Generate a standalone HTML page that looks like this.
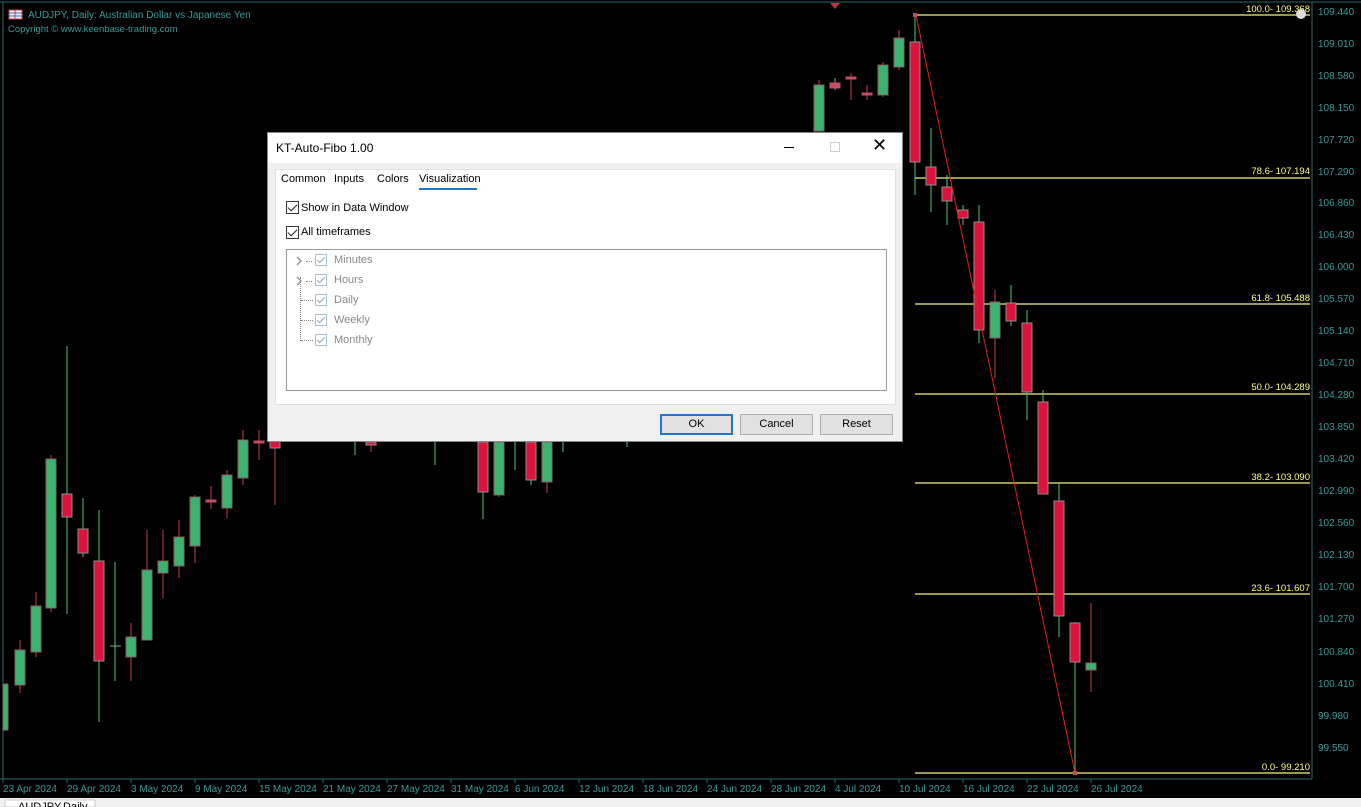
<!DOCTYPE html>
<html><head><meta charset="utf-8"><style>
*{margin:0;padding:0;box-sizing:border-box}
body{width:1361px;height:807px;background:#000;position:relative;overflow:hidden;font-family:"Liberation Sans",sans-serif}
svg{position:absolute;left:0;top:0}
.dlg{position:absolute;left:267px;top:132px;width:636px;height:310px;background:#f0f0f0;border:1px solid #888;font-size:11px;color:#000}
.tb{height:30px;background:#fff;position:relative}
.tb .t{position:absolute;left:8px;top:8px;font-size:12px}
.tab{position:absolute;top:40px;font-size:11px}
.cb{position:absolute;width:13px;height:13px;border:1px solid #333;background:#fff}
.cb:after{content:"";position:absolute;left:3px;top:0px;width:4px;height:8px;border:solid #222;border-width:0 1.5px 1.5px 0;transform:rotate(45deg)}
.gcb{position:absolute;width:12px;height:12px;border:1px solid #a8c0d0;background:#fff}
.gcb:after{content:"";position:absolute;left:3px;top:0px;width:3px;height:7px;border:solid #88a8c0;border-width:0 1.2px 1.2px 0;transform:rotate(45deg)}
.lbl{position:absolute;font-size:11px}
.g{color:#888}
.btn{position:absolute;top:281px;width:73px;height:21px;background:#e1e1e1;border:1px solid #adadad;text-align:center;line-height:19px;font-size:11px}
</style></head><body>
<svg width="1361" height="807" xmlns="http://www.w3.org/2000/svg" font-family="Liberation Sans, sans-serif">
<line x1="0" y1="2" x2="1361" y2="2" stroke="#2a6a6a"/>
<line x1="3" y1="2" x2="3" y2="779" stroke="#2a6a6a"/>
<line x1="1312" y1="2" x2="1312" y2="779" stroke="#2a6a6a"/>
<line x1="0" y1="779" x2="1312" y2="779" stroke="#2a6a6a"/>
<g fill="#3a9a9a" font-size="10">
<text x="1318" y="15">109.440</text><text x="1318" y="47">109.010</text><text x="1318" y="79">108.580</text><text x="1318" y="111">108.150</text><text x="1318" y="143">107.720</text><text x="1318" y="175">107.290</text><text x="1318" y="206">106.860</text><text x="1318" y="238">106.430</text><text x="1318" y="270">106.000</text><text x="1318" y="302">105.570</text><text x="1318" y="334">105.140</text><text x="1318" y="366">104.710</text><text x="1318" y="398">104.280</text><text x="1318" y="430">103.850</text><text x="1318" y="462">103.420</text><text x="1318" y="494">102.990</text><text x="1318" y="526">102.560</text><text x="1318" y="558">102.130</text><text x="1318" y="590">101.700</text><text x="1318" y="622">101.270</text><text x="1318" y="655">100.840</text><text x="1318" y="687">100.410</text><text x="1318" y="719">99.980</text><text x="1318" y="751">99.550</text>
<text x="3" y="792">23 Apr 2024</text><text x="67" y="792">29 Apr 2024</text><text x="131" y="792">3 May 2024</text><text x="195" y="792">9 May 2024</text><text x="259" y="792">15 May 2024</text><text x="323" y="792">21 May 2024</text><text x="387" y="792">27 May 2024</text><text x="451" y="792">31 May 2024</text><text x="515" y="792">6 Jun 2024</text><text x="579" y="792">12 Jun 2024</text><text x="643" y="792">18 Jun 2024</text><text x="707" y="792">24 Jun 2024</text><text x="771" y="792">28 Jun 2024</text><text x="835" y="792">4 Jul 2024</text><text x="899" y="792">10 Jul 2024</text><text x="963" y="792">16 Jul 2024</text><text x="1027" y="792">22 Jul 2024</text><text x="1091" y="792">26 Jul 2024</text>
<text x="28" y="18">AUDJPY, Daily:  Australian Dollar vs Japanese Yen</text>
<text x="8" y="32" font-size="9.5">Copyright © www.keenbase-trading.com</text>
</g>
<rect x="9" y="10" width="13" height="9" fill="#eef" stroke="#c44"/><line x1="9" y1="13" x2="22" y2="13" stroke="#46c"/><line x1="9" y1="16" x2="22" y2="16" stroke="#46c"/><line x1="15" y1="10" x2="15" y2="19" stroke="#c44"/>
<path d="M830 3 L840 3 L835 9Z" fill="#c0304a"/>
<g stroke="#2a6a6a"><line x1="3" y1="779" x2="3" y2="783"/><line x1="67" y1="779" x2="67" y2="783"/><line x1="131" y1="779" x2="131" y2="783"/><line x1="195" y1="779" x2="195" y2="783"/><line x1="259" y1="779" x2="259" y2="783"/><line x1="323" y1="779" x2="323" y2="783"/><line x1="387" y1="779" x2="387" y2="783"/><line x1="451" y1="779" x2="451" y2="783"/><line x1="515" y1="779" x2="515" y2="783"/><line x1="579" y1="779" x2="579" y2="783"/><line x1="643" y1="779" x2="643" y2="783"/><line x1="707" y1="779" x2="707" y2="783"/><line x1="771" y1="779" x2="771" y2="783"/><line x1="835" y1="779" x2="835" y2="783"/><line x1="899" y1="779" x2="899" y2="783"/><line x1="963" y1="779" x2="963" y2="783"/><line x1="1027" y1="779" x2="1027" y2="783"/><line x1="1091" y1="779" x2="1091" y2="783"/></g>
<g stroke="#f4f47c" stroke-width="1.3">
<line x1="915" y1="15" x2="1310" y2="15"/><line x1="915" y1="178" x2="1310" y2="178"/><line x1="915" y1="304" x2="1310" y2="304"/><line x1="915" y1="394" x2="1310" y2="394"/><line x1="915" y1="483" x2="1310" y2="483"/><line x1="915" y1="594" x2="1310" y2="594"/><line x1="915" y1="773" x2="1310" y2="773"/>
</g>
<g fill="#ffff80" font-size="9.5" text-anchor="end">
<text x="1310" y="12">100.0- 109.368</text><text x="1310" y="174">78.6- 107.194</text><text x="1310" y="301">61.8- 105.488</text><text x="1310" y="390">50.0- 104.289</text><text x="1310" y="480">38.2- 103.090</text><text x="1310" y="591">23.6- 101.607</text><text x="1310" y="770">0.0- 99.210</text>
</g>
<circle cx="1301" cy="14" r="5" fill="#ddd"/>
<g stroke="#c84050"><line x1="6" y1="684" x2="6" y2="730"/><line x1="20" y1="640" x2="20" y2="693"/><line x1="36" y1="592" x2="36" y2="657"/><line x1="51" y1="455" x2="51" y2="612"/><line x1="131" y1="623" x2="131" y2="681"/><line x1="147" y1="530" x2="147" y2="598"/><line x1="163" y1="530" x2="163" y2="598"/><line x1="179" y1="520" x2="179" y2="578"/><line x1="195" y1="495" x2="195" y2="563"/><line x1="211" y1="486" x2="211" y2="509"/><line x1="227" y1="470" x2="227" y2="518"/><line x1="243" y1="430" x2="243" y2="485"/><line x1="259" y1="430" x2="259" y2="460"/><line x1="275" y1="440" x2="275" y2="505"/><line x1="819" y1="80" x2="819" y2="131"/><line x1="851" y1="73" x2="851" y2="100"/><line x1="867" y1="85" x2="867" y2="100"/><line x1="883" y1="62" x2="883" y2="97"/><line x1="899" y1="30" x2="899" y2="70"/><line x1="995" y1="290" x2="995" y2="378"/><line x1="1091" y1="603" x2="1091" y2="692"/><line x1="499" y1="442" x2="499" y2="497"/><line x1="547" y1="442" x2="547" y2="493"/><line x1="371" y1="442" x2="371" y2="452"/></g>
<g stroke="#60c080"><line x1="67" y1="346" x2="67" y2="614"/><line x1="83" y1="498" x2="83" y2="557"/><line x1="99" y1="510" x2="99" y2="722"/><line x1="115" y1="562" x2="115" y2="681"/><line x1="110" y1="646" x2="121" y2="646"/><line x1="915" y1="15" x2="915" y2="195"/><line x1="931" y1="128" x2="931" y2="212"/><line x1="947" y1="175" x2="947" y2="225"/><line x1="963" y1="205" x2="963" y2="225"/><line x1="979" y1="205" x2="979" y2="343"/><line x1="1011" y1="285" x2="1011" y2="326"/><line x1="1027" y1="310" x2="1027" y2="420"/><line x1="1043" y1="390" x2="1043" y2="494"/><line x1="1059" y1="483" x2="1059" y2="637"/><line x1="1075" y1="622" x2="1075" y2="773"/><line x1="483" y1="442" x2="483" y2="519"/><line x1="531" y1="442" x2="531" y2="485"/><line x1="355" y1="442" x2="355" y2="455"/><line x1="435" y1="442" x2="435" y2="465"/><line x1="515" y1="442" x2="515" y2="470"/><line x1="563" y1="442" x2="563" y2="452"/><line x1="627" y1="442" x2="627" y2="447"/><line x1="835" y1="78" x2="835" y2="90"/></g>
<g fill="#3cb371" stroke="#8a6060">
<rect x="3" y="684" width="5" height="46"/><rect x="15" y="650" width="10" height="35"/><rect x="31" y="606" width="10" height="46"/><rect x="46" y="459" width="10" height="149"/><rect x="126" y="637" width="10" height="20"/><rect x="142" y="570" width="10" height="70"/><rect x="158" y="561" width="10" height="12"/><rect x="174" y="537" width="10" height="29"/><rect x="190" y="497" width="10" height="49"/><rect x="222" y="475" width="10" height="33"/><rect x="238" y="440" width="10" height="38"/><rect x="494" y="442" width="10" height="53"/><rect x="542" y="442" width="10" height="40"/><rect x="814" y="85" width="10" height="46"/><rect x="878" y="65" width="10" height="30"/><rect x="894" y="38" width="10" height="29"/><rect x="990" y="302" width="10" height="36"/><rect x="1086" y="663" width="10" height="7"/>
</g>
<g fill="#c05060" stroke="#c05060"><rect x="206" y="500" width="10" height="2"/><rect x="254" y="441" width="10" height="2"/><rect x="846" y="77" width="10" height="2"/><rect x="862" y="93" width="10" height="2"/><rect x="830" y="83" width="10" height="5"/></g>
<g fill="#dc143c" stroke="#909090">
<rect x="62" y="494" width="10" height="23"/><rect x="78" y="529" width="10" height="24"/><rect x="94" y="561" width="10" height="100"/><rect x="270" y="440" width="10" height="8"/><rect x="478" y="442" width="10" height="50"/><rect x="526" y="442" width="10" height="38"/><rect x="366" y="442" width="10" height="3"/>
<rect x="910" y="42" width="10" height="120"/><rect x="926" y="167" width="10" height="18"/><rect x="942" y="187" width="10" height="14"/><rect x="958" y="210" width="10" height="8"/><rect x="974" y="222" width="10" height="108"/><rect x="1006" y="303" width="10" height="18"/><rect x="1022" y="323" width="10" height="69"/><rect x="1038" y="402" width="10" height="92"/><rect x="1054" y="501" width="10" height="115"/><rect x="1070" y="623" width="10" height="39"/>
</g>
<line x1="916" y1="15" x2="1075" y2="773" stroke="#e02020"/>
<rect x="913" y="13" width="4" height="4" fill="#c05060"/><rect x="1073" y="771" width="4" height="4" fill="#c05060"/>
<rect x="0" y="798" width="1361" height="9" fill="#f0f0f0"/>
<rect x="5" y="800" width="90" height="7" fill="#fff" stroke="#ccc"/>
<text x="18" y="810" font-size="11" fill="#000">AUDJPY,Daily</text>
</svg>
<div class="dlg">
<div class="tb"><span class="t">KT-Auto-Fibo 1.00</span>
<span style="position:absolute;left:516px;top:14px;width:10px;border-top:1px solid #000"></span>
<span style="position:absolute;left:562px;top:9px;width:10px;height:10px;border:1px solid #ccc"></span>
<span style="position:absolute;left:604px;top:2px;font-size:18px;font-weight:300">✕</span></div>
<div style="position:absolute;left:7px;top:36px;width:621px;height:236px;background:#fff;border:1px solid #e0e0e0"></div>
<span class="tab" style="left:13px">Common</span><span class="tab" style="left:66px">Inputs</span><span class="tab" style="left:109px">Colors</span><span class="tab" style="left:151px">Visualization</span>
<div style="position:absolute;left:151px;top:55px;width:58px;height:2px;background:#1e78c8"></div>
<div class="cb" style="left:18px;top:68px"></div><span class="lbl" style="left:33px;top:69px">Show in Data Window</span>
<div class="cb" style="left:18px;top:93px"></div><span class="lbl" style="left:33px;top:93px">All timeframes</span>
<div style="position:absolute;left:18px;top:116px;width:601px;height:142px;border:1px solid #999;background:#fff"></div>
<div style="position:absolute;left:32px;top:144px;width:1px;height:64px;border-left:1px dotted #888"></div>
<svg style="position:absolute;left:27px;top:123px" width="8" height="30"><path d="M2 1 L6 5 L2 9 M2 21 L6 25 L2 29" stroke="#999" stroke-width="1.5" fill="none"/></svg>
<div style="position:absolute;left:38px;top:128px;width:6px;border-top:1px dotted #888"></div><div style="position:absolute;left:38px;top:148px;width:6px;border-top:1px dotted #888"></div>
<div style="position:absolute;left:33px;top:167px;width:12px;border-top:1px dotted #888"></div><div style="position:absolute;left:33px;top:187px;width:12px;border-top:1px dotted #888"></div><div style="position:absolute;left:33px;top:207px;width:12px;border-top:1px dotted #888"></div>
<div class="gcb" style="left:47px;top:121px"></div><span class="lbl g" style="left:66px;top:121px">Minutes</span>
<div class="gcb" style="left:47px;top:141px"></div><span class="lbl g" style="left:66px;top:141px">Hours</span>
<div class="gcb" style="left:47px;top:161px"></div><span class="lbl g" style="left:66px;top:161px">Daily</span>
<div class="gcb" style="left:47px;top:181px"></div><span class="lbl g" style="left:66px;top:181px">Weekly</span>
<div class="gcb" style="left:47px;top:201px"></div><span class="lbl g" style="left:66px;top:201px">Monthly</span>
<div class="btn" style="left:392px;border:2px solid #1e78d0;line-height:17px">OK</div>
<div class="btn" style="left:472px">Cancel</div>
<div class="btn" style="left:552px">Reset</div>
</div>
</body></html>
